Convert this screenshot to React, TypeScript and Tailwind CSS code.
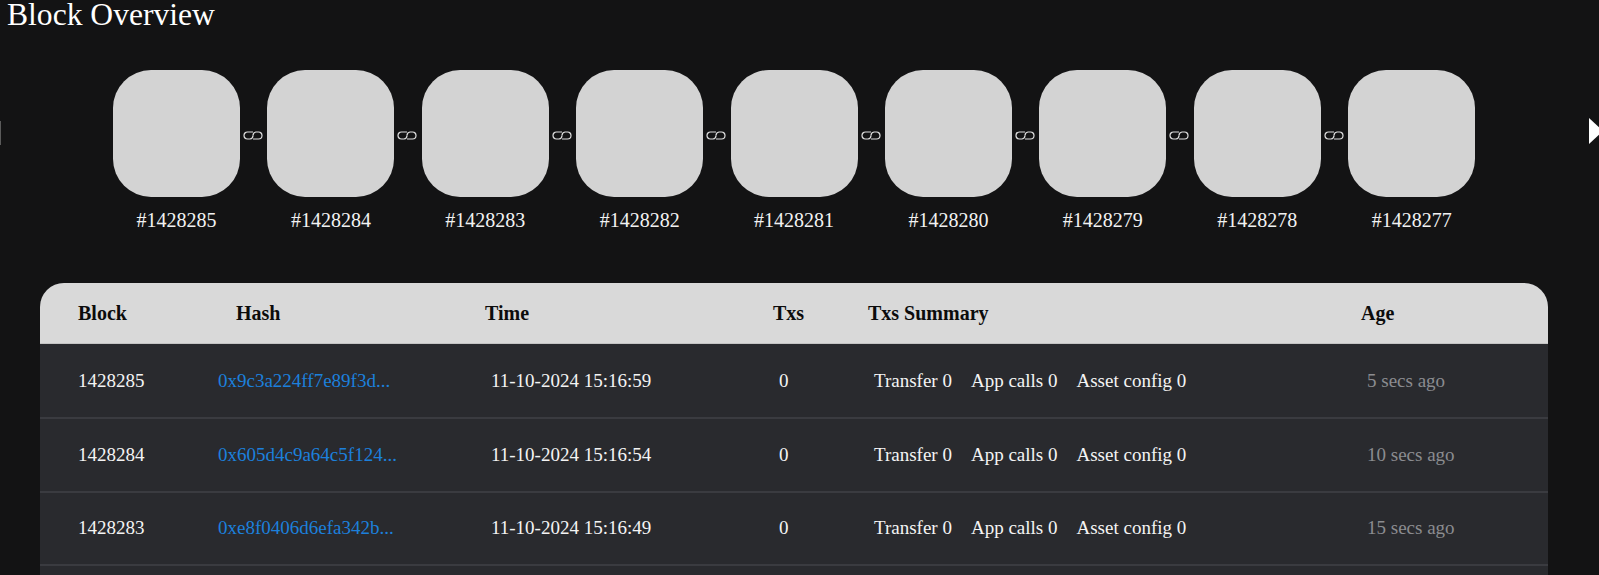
const blocks = [1428285, 1428284, 1428283, 1428282, 1428281, 1428280, 1428279, 1428278, 1428277];

const rows = [
  { block: "1428285", hash: "0x9c3a224ff7e89f3d...", time: "11-10-2024 15:16:59", age: "5 secs ago" },
  { block: "1428284", hash: "0x605d4c9a64c5f124...", time: "11-10-2024 15:16:54", age: "10 secs ago" },
  { block: "1428283", hash: "0xe8f0406d6efa342b...", time: "11-10-2024 15:16:49", age: "15 secs ago" },
];

const cols = "grid grid-cols-[177px_268px_287px_96px_493px_187px]";

function ChainIcon() {
  return (
    <svg className="shrink-0" width="20" height="9" viewBox="0 0 20 9" fill="none" stroke="#dedede" strokeWidth="1.2">
      <path d="M10 1H4.5a3.5 3.5 0 0 0 0 7H7a3.5 3.5 0 0 0 3-3.5" />
      <path d="M10 8h5.5a3.5 3.5 0 0 0 0-7H13a3.5 3.5 0 0 0-3 3.5" />
    </svg>
  );
}

export default function App() {
  return (
    <div className="relative flex flex-col h-screen overflow-hidden bg-[#131314] text-white font-['Liberation_Serif',serif]">
      <h1 className="pl-[7px] text-[31.6px] leading-[29px] h-[70px]">Block Overview</h1>

      <div className="flex pl-[113px] h-[213px]">
        {blocks.map((b, i) => (
          <div key={b} className="flex items-start">
            <div className="flex flex-col items-center w-[127px]">
              <div className="w-[127px] h-[127px] rounded-[38px] bg-[#d3d3d3]" />
              <span className="mt-[11px] text-[20px] leading-[24px] text-[#f2f2f2]">#{b}</span>
            </div>
            {i < blocks.length - 1 && (
              <div className="flex items-center justify-start w-[27.4px] h-[127px] pt-[3px] pl-[3px]">
                <ChainIcon />
              </div>
            )}
          </div>
        ))}
      </div>

      {/* carousel arrows, cut off by the window edge */}
      <div className="absolute left-0 top-[121px] w-[1px] h-[24px] bg-[#5a5a5a]" />
      <div className="absolute right-[-4px] top-[118px] w-0 h-0 border-y-[13.5px] border-y-transparent border-l-[14px] border-l-white" />

      <div className="flex flex-col flex-1 ml-[40px] w-[1508px] rounded-t-[24px] overflow-hidden bg-[#292a2e]">
        <div className={`${cols} items-center h-[61px] bg-[#d9d9d9] text-[#0c0c0c] text-[20px] font-bold border-b border-[#c4c4c4]`}>
          <div className="pl-[38px]">Block</div>
          <div className="pl-[19px]">Hash</div>
          <div>Time</div>
          <div className="pl-[1px]">Txs</div>
          <div>Txs Summary</div>
          <div>Age</div>
        </div>
        <div className="pt-[2px]">
          {rows.map((r) => (
            <div key={r.block} className={`${cols} items-center h-[73.4px] text-[19px] text-[#f4f4f4] border-b-2 border-[#3a3b40]`}>
              <div className="pl-[38px]">{r.block}</div>
              <a className="pl-[1px] text-[#1c80dc]">{r.hash}</a>
              <div className="pl-[6px]">{r.time}</div>
              <div className="pl-[7px]">0</div>
              <div className="flex gap-[19px] pl-[6px]">
                <span>Transfer 0</span>
                <span>App calls 0</span>
                <span>Asset config 0</span>
              </div>
              <div className="pl-[6px] text-[#8b8c90]">{r.age}</div>
            </div>
          ))}
        </div>
      </div>
    </div>
  );
}
